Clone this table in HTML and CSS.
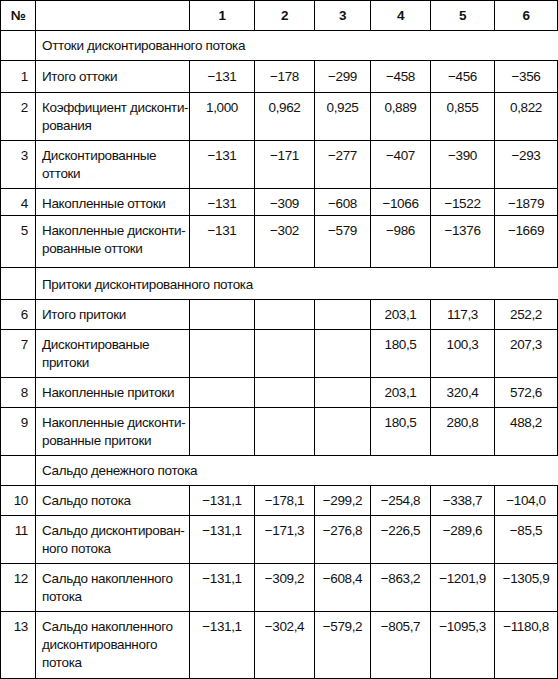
FILE: index.html
```html
<!DOCTYPE html>
<html lang="ru">
<head>
<meta charset="utf-8">
<title>Дисконтированный поток</title>
<link rel="stylesheet" href="styles.css">
</head>
<body>
<table class="grid">
  <colgroup>
    <col class="c-num"><col class="c-name"><col class="c-1"><col class="c-2"><col class="c-3"><col class="c-4"><col class="c-5"><col class="c-6">
  </colgroup>
  <thead>
    <tr class="head">
      <th class="num">№</th><th class="name"></th><th>1</th><th>2</th><th>3</th><th>4</th><th>5</th><th>6</th>
    </tr>
  </thead>
  <tbody>
    <tr><td class="num"></td><td class="section" colspan="7">Оттоки дисконтированного потока</td></tr>
    <tr class="row-loose"><td class="num">1</td><td class="name">Итого оттоки</td><td>−131</td><td>−178</td><td>−299</td><td>−458</td><td>−456</td><td>−356</td></tr>
    <tr><td class="num">2</td><td class="name">Коэффициент дисконти-<br>рования</td><td>1,000</td><td>0,962</td><td>0,925</td><td>0,889</td><td>0,855</td><td>0,822</td></tr>
    <tr><td class="num">3</td><td class="name">Дисконтированные<br>оттоки</td><td>−131</td><td>−171</td><td>−277</td><td>−407</td><td>−390</td><td>−293</td></tr>
    <tr class="row-tight"><td class="num">4</td><td class="name">Накопленные оттоки</td><td>−131</td><td>−309</td><td>−608</td><td>−1066</td><td>−1522</td><td>−1879</td></tr>
    <tr class="row-deep"><td class="num">5</td><td class="name">Накопленные дисконти-<br>рованные оттоки</td><td>−131</td><td>−302</td><td>−579</td><td>−986</td><td>−1376</td><td>−1669</td></tr>
    <tr class="row-loose-top"><td class="num"></td><td class="section" colspan="7">Притоки дисконтированного потока</td></tr>
    <tr><td class="num">6</td><td class="name">Итого притоки</td><td></td><td></td><td></td><td>203,1</td><td>117,3</td><td>252,2</td></tr>
    <tr><td class="num">7</td><td class="name">Дисконтированые<br>притоки</td><td></td><td></td><td></td><td>180,5</td><td>100,3</td><td>207,3</td></tr>
    <tr><td class="num">8</td><td class="name">Накопленные притоки</td><td></td><td></td><td></td><td>203,1</td><td>320,4</td><td>572,6</td></tr>
    <tr><td class="num">9</td><td class="name">Накопленные дисконти-<br>рованные притоки</td><td></td><td></td><td></td><td>180,5</td><td>280,8</td><td>488,2</td></tr>
    <tr><td class="num"></td><td class="section" colspan="7">Сальдо денежного потока</td></tr>
    <tr><td class="num">10</td><td class="name">Сальдо потока</td><td>−131,1</td><td>−178,1</td><td>−299,2</td><td>−254,8</td><td>−338,7</td><td>−104,0</td></tr>
    <tr><td class="num">11</td><td class="name">Сальдо дисконтирован-<br>ного потока</td><td>−131,1</td><td>−171,3</td><td>−276,8</td><td>−226,5</td><td>−289,6</td><td>−85,5</td></tr>
    <tr><td class="num">12</td><td class="name">Сальдо накопленного<br>потока</td><td>−131,1</td><td>−309,2</td><td>−608,4</td><td>−863,2</td><td>−1201,9</td><td>−1305,9</td></tr>
    <tr class="row-last"><td class="num">13</td><td class="name">Сальдо накопленного<br>дисконтированного<br>потока</td><td>−131,1</td><td>−302,4</td><td>−579,2</td><td>−805,7</td><td>−1095,3</td><td>−1180,8</td></tr>
  </tbody>
</table>
</body>
</html>
```

FILE: styles.css
```css
html, body {
  margin: 0;
  padding: 0;
  background: #ffffff;
}

.grid {
  border-collapse: collapse;
  table-layout: fixed;
  width: 558px;
  font-family: "Liberation Sans", Arial, sans-serif;
  font-size: 13.5px;
  letter-spacing: -0.35px;
  line-height: 18px;
  color: #111111;
}

.c-num { width: 35px; }
.c-name { width: 154px; }
.c-1 { width: 65px; }
.c-2 { width: 60px; }
.c-3 { width: 56px; }
.c-4 { width: 60px; }
.c-5 { width: 64px; }
.c-6 { width: 63px; }

.grid th,
.grid td {
  border: 1px solid #000000;
  padding: 6px 4px 5px;
  text-align: center;
  vertical-align: top;
  white-space: nowrap;
}

.grid th {
  font-weight: bold;
}

.grid .row-loose td {
  padding-top: 7px;
  padding-bottom: 6px;
}

.grid .row-tight td {
  padding-top: 6px;
  padding-bottom: 2px;
}

.grid .row-deep td {
  padding-top: 6px;
  padding-bottom: 9px;
}

.grid .row-loose-top td {
  padding-top: 8px;
  padding-bottom: 5px;
}

.grid .row-last td {
  padding-bottom: 6px;
}

.grid td.num {
  text-align: right;
  padding-right: 7px;
}

.grid th.num {
  text-align: center;
}

.grid td.name,
.grid td.section {
  text-align: left;
  padding-left: 6px;
}

.grid td.section {
  border-right: none;
}
```
